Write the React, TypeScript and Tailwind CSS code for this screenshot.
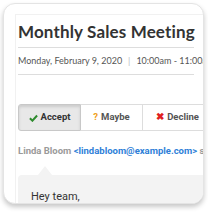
import React from "react";

export default function App() {
  return (
    <div className="w-[208px] h-[215px] bg-white pl-[3px] pt-[3px]">
      <div className="w-[201px] h-[201px] rounded-[12px] overflow-hidden bg-white border border-[#e4e4e4] shadow-[0_3px_5px_rgba(0,0,0,0.22)]">
        <div className="ml-[11px] mt-[10px] w-[320px] h-[260px] border-l border-t border-[#f1f1f1] pl-[2px] pt-[6px]">
          <div className="w-[176px]">
            <h1
              className="text-[17px] leading-[22px] font-bold text-[#333333] whitespace-nowrap tracking-[0.15px]"
              style={{ fontFamily: "Lato, 'Open Sans', sans-serif" }}
            >
              Monthly Sales Meeting
            </h1>
            <div className="mt-[4px] h-px bg-[#dddddd]" />
            <div
              className="flex items-center h-[26px] text-[9px] text-[#555555] whitespace-nowrap"
              style={{ fontFamily: "Lato, 'Open Sans', sans-serif" }}
            >
              <span>Monday, February 9, 2020</span>
              <span className="mx-[6px] text-[#bbbbbb]">|</span>
              <span>10:00am - 11:00am</span>
            </div>
            <div className="h-px bg-[#dddddd]" />
          </div>
          <div
            className="mt-[29px] flex text-[9.5px] font-bold whitespace-nowrap"
            style={{ fontFamily: "Roboto, 'Liberation Sans', sans-serif" }}
          >
            <div className="w-[63px] h-[27px] flex items-center justify-center gap-[3px] bg-[#e8e8e8] border border-[#c8c8c8] rounded-l-[3px] shadow-[inset_0_2px_3px_rgba(0,0,0,0.12)] text-[#333333]">
              <svg width="9" height="8" viewBox="0 0 10 8">
                <path d="M1 4.2 L3.8 7 L9 1.2" stroke="#2e8b2e" strokeWidth="2.2" fill="none" />
              </svg>
              <span>Accept</span>
            </div>
            <div className="w-[62px] h-[27px] flex items-center justify-center gap-[3px] bg-white border-y border-r border-[#dddddd] text-[#555555]">
              <span className="text-[#f0a020]">?</span>
              <span>Maybe</span>
            </div>
            <div className="w-[70px] h-[27px] flex items-center justify-center gap-[3px] bg-white border-y border-r border-[#dddddd] text-[#555555]">
              <span className="text-[#e02020]">✖</span>
              <span>Decline</span>
            </div>
          </div>
          <div
            className="mt-[14px] text-[9.5px] leading-[11px] font-bold whitespace-nowrap text-[#9a9a9a]"
            style={{ fontFamily: "Roboto, 'Liberation Sans', sans-serif" }}
          >
            Linda Bloom <span className="text-[#2f7fd8]">&lt;lindabloom@example.com&gt;</span> said:
          </div>
          <div className="ml-[20px] mt-[10px] w-0 h-0 border-l-[7px] border-r-[7px] border-b-[9px] border-l-transparent border-r-transparent border-b-[#f3f3f3]" />
          <div
            className="w-[250px] h-[60px] bg-[#f3f3f3] rounded-tl-[4px] pl-[13px] pt-[15px] text-[11px] leading-[13px] text-[#333333]"
            style={{ fontFamily: "Roboto, 'Liberation Sans', sans-serif" }}
          >
            Hey team,
          </div>
        </div>
      </div>
    </div>
  );
}
